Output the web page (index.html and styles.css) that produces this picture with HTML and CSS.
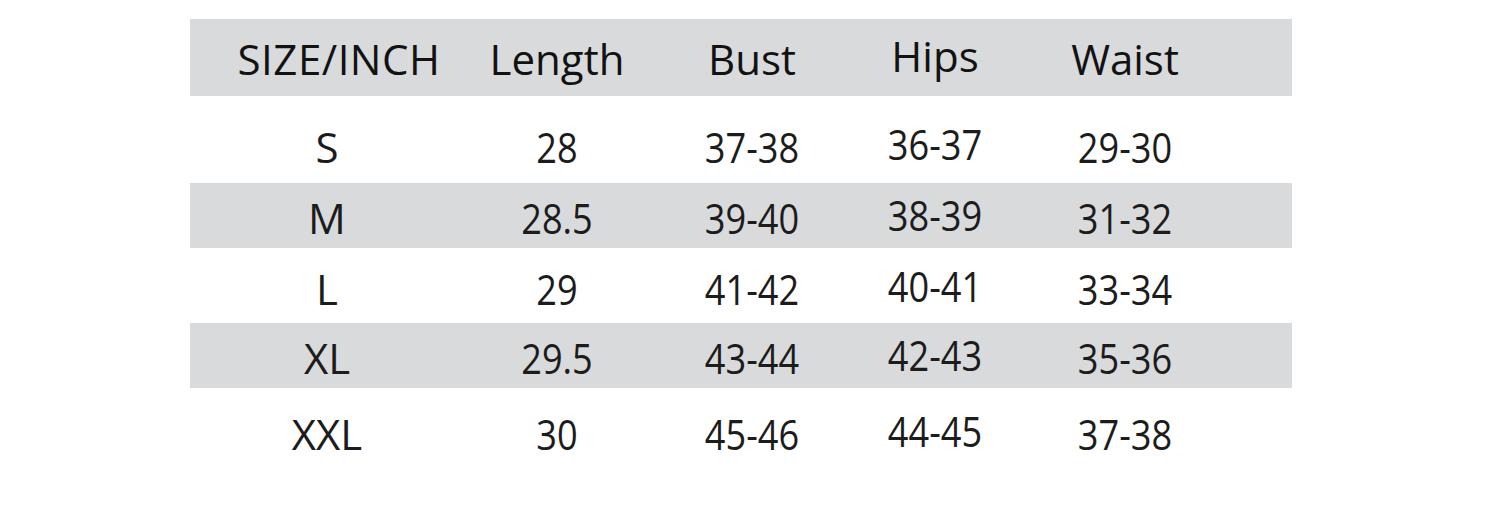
FILE: index.html
```html
<!DOCTYPE html>
<html lang="en">
<head>
<meta charset="utf-8">
<title>Size Chart</title>
<link rel="stylesheet" href="styles.css">
</head>
<body>
<div class="chart">
  <div class="row head">
    <div class="cell">SIZE/INCH</div><div class="cell">Length</div><div class="cell">Bust</div><div class="cell hips">Hips</div><div class="cell">Waist</div>
  </div>
  <div class="row r-s">
    <div class="cell">S</div><div class="cell">28</div><div class="cell">37-38</div><div class="cell hips">36-37</div><div class="cell">29-30</div>
  </div>
  <div class="row band r-m">
    <div class="cell">M</div><div class="cell">28.5</div><div class="cell">39-40</div><div class="cell hips">38-39</div><div class="cell">31-32</div>
  </div>
  <div class="row r-l">
    <div class="cell">L</div><div class="cell">29</div><div class="cell">41-42</div><div class="cell hips">40-41</div><div class="cell">33-34</div>
  </div>
  <div class="row band r-xl">
    <div class="cell">XL</div><div class="cell">29.5</div><div class="cell">43-44</div><div class="cell hips">42-43</div><div class="cell">35-36</div>
  </div>
  <div class="row r-xxl">
    <div class="cell">XXL</div><div class="cell">30</div><div class="cell">45-46</div><div class="cell hips">44-45</div><div class="cell">37-38</div>
  </div>
</div>
</body>
</html>
```
FILE: styles.css
```css
html, body {
  margin: 0;
  padding: 0;
  background: #ffffff;
}
body {
  font-family: "Open Sans", "Noto Sans", sans-serif;
  color: #1c1c1c;
}
.chart {
  margin: 19px 0 0 190px;
  width: 1102px;
}
.row {
  display: grid;
  grid-template-columns: 286px 162px 228px 138px 242px 1fr;
  align-items: center;
  box-sizing: border-box;
  font-size: 42px;
  line-height: 1;
}
.cell {
  text-align: center;
}
.hips {
  position: relative;
  top: -3px;
}
.head {
  background: #d9dadb;
  height: 77px;
  padding-top: 3px;
  color: #121212;
}
.head .cell:first-child {
  padding-left: 12px;
  letter-spacing: 0.5px;
}
.row:not(.head) .cell:first-child {
  padding-right: 12px;
}
.row:not(.head) .cell:not(:first-child) {
  transform: scaleX(0.86);
}
.band {
  background: #d9dadb;
}
.r-s { height: 87px; padding-top: 15px; }
.r-m { height: 65px; padding-top: 5px; }
.r-l { height: 75px; padding-top: 7px; }
.r-xl { height: 65px; padding-top: 5px; }
.r-xxl { height: 92px; }
```
